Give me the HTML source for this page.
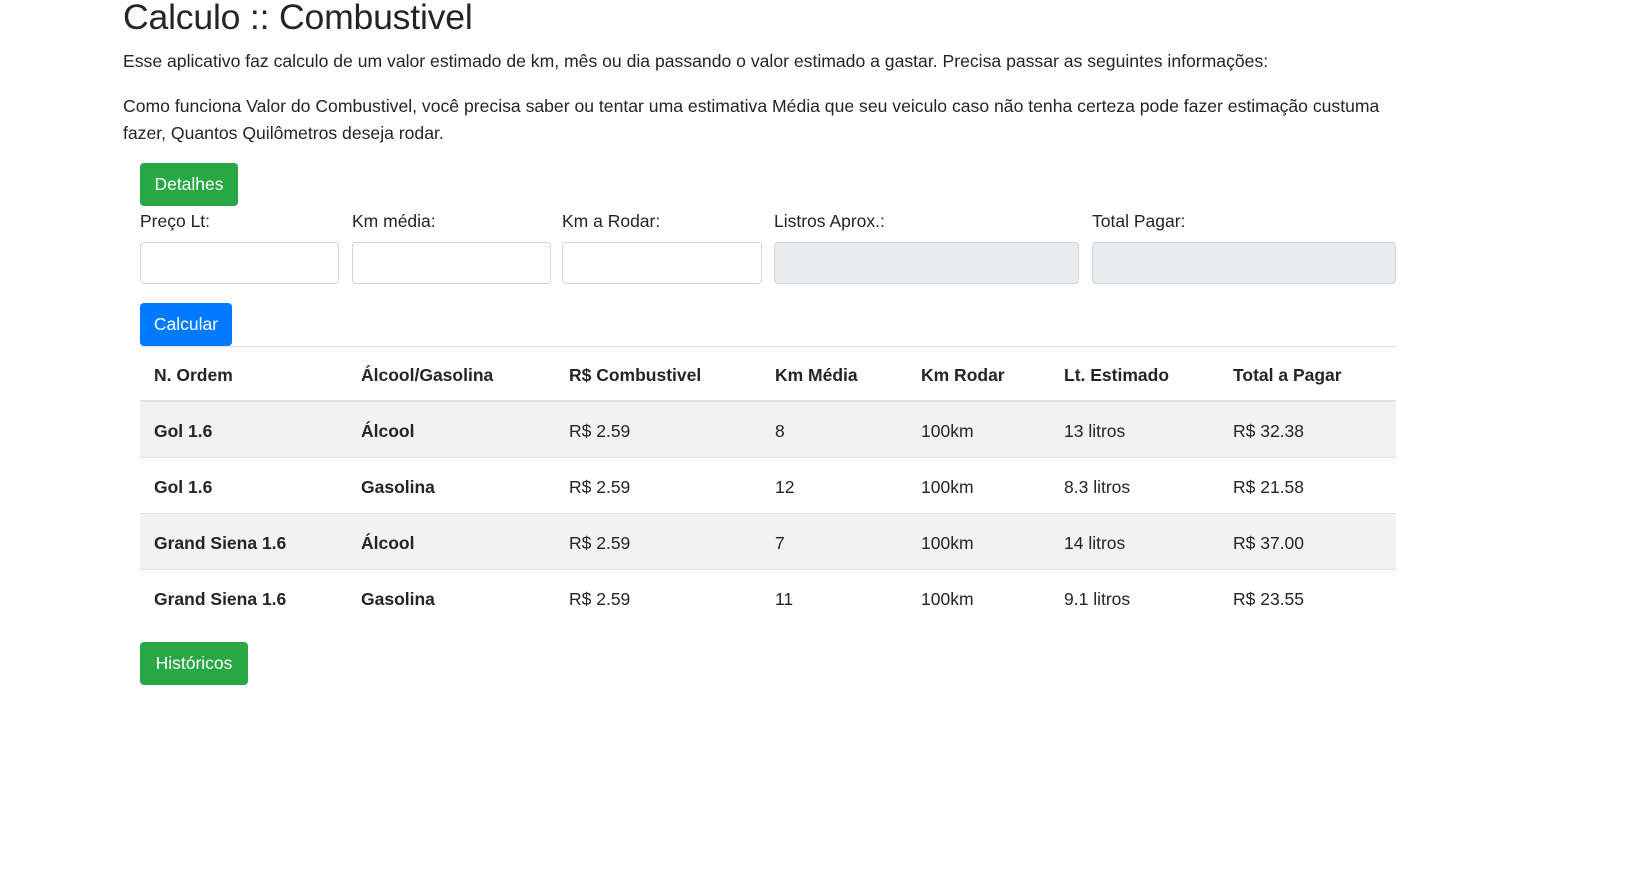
<!DOCTYPE html>
<html><head><meta charset="utf-8"><style>
body{margin:0;background:#fff;font-family:"Liberation Sans",sans-serif;color:#212529;font-size:17.5px;}
.c{position:absolute;left:123px;top:0;width:1320px;}
h1{font-weight:400;font-size:35.6px;margin:-6px 0 0;line-height:46px;letter-spacing:-0.2px}
p{margin:0;line-height:27px;font-size:17.6px}
.btn{position:absolute;color:#fff;border-radius:4px;font-size:17.5px;text-align:center;box-sizing:border-box}
.g{background:#28a745}.b{background:#007bff}
label{position:absolute;top:211px;font-size:17.5px}
.in{position:absolute;top:242px;height:42px;box-sizing:border-box;border:1px solid #ced4da;border-radius:4px;background:#fff}
.ro{background:#e9ecef}
table{position:absolute;left:140px;top:346px;width:1256px;border-collapse:collapse;font-size:17.5px}
td,th{text-align:left;padding:3px 0 0 14px;border-top:1px solid #dee2e6}
th{height:50px;border-bottom:2px solid #dee2e6}
td{height:52px}
tr.s td{background:#f2f2f2}
td.b2{font-weight:bold}
</style></head><body>
<div class="c">
<h1>Calculo :: Combustivel</h1>
<p style="margin-top:8px">Esse aplicativo faz calculo de um valor estimado de km, mês ou dia passando o valor estimado a gastar. Precisa passar as seguintes informações:</p>
<p style="margin-top:18px">Como funciona Valor do Combustivel, você precisa saber ou tentar uma estimativa Média que seu veiculo caso não tenha certeza pode fazer estimação custuma<br>fazer, Quantos Quilômetros deseja rodar.</p>
</div>
<div class="btn g" style="left:140px;top:163px;width:98px;height:43px;line-height:43px">Detalhes</div>
<label style="left:140px">Preço Lt:</label>
<label style="left:352px">Km média:</label>
<label style="left:562px">Km a Rodar:</label>
<label style="left:774px">Listros Aprox.:</label>
<label style="left:1092px">Total Pagar:</label>
<div class="in" style="left:140px;width:199px"></div>
<div class="in" style="left:352px;width:199px"></div>
<div class="in" style="left:562px;width:200px"></div>
<div class="in ro" style="left:774px;width:305px"></div>
<div class="in ro" style="left:1092px;width:304px"></div>
<div class="btn b" style="left:140px;top:303px;width:92px;height:43px;line-height:43px">Calcular</div>
<table>
<colgroup><col style="width:207px"><col style="width:208px"><col style="width:206px"><col style="width:146px"><col style="width:143px"><col style="width:169px"><col></colgroup>
<tr><th>N. Ordem</th><th>Álcool/Gasolina</th><th>R$ Combustivel</th><th>Km Média</th><th>Km Rodar</th><th>Lt. Estimado</th><th>Total a Pagar</th></tr>
<tr class="s"><td class="b2">Gol 1.6</td><td class="b2">Álcool</td><td>R$ 2.59</td><td>8</td><td>100km</td><td>13 litros</td><td>R$ 32.38</td></tr>
<tr><td class="b2">Gol 1.6</td><td class="b2">Gasolina</td><td>R$ 2.59</td><td>12</td><td>100km</td><td>8.3 litros</td><td>R$ 21.58</td></tr>
<tr class="s"><td class="b2">Grand Siena 1.6</td><td class="b2">Álcool</td><td>R$ 2.59</td><td>7</td><td>100km</td><td>14 litros</td><td>R$ 37.00</td></tr>
<tr><td class="b2">Grand Siena 1.6</td><td class="b2">Gasolina</td><td>R$ 2.59</td><td>11</td><td>100km</td><td>9.1 litros</td><td>R$ 23.55</td></tr>
</table>
<div class="btn g" style="left:140px;top:642px;width:108px;height:43px;line-height:43px">Históricos</div>
</body></html>
